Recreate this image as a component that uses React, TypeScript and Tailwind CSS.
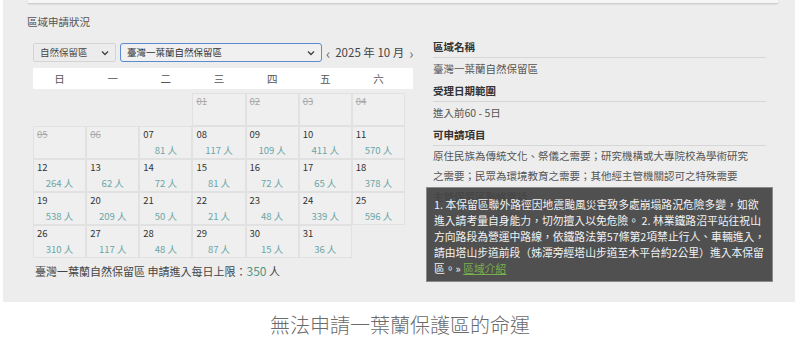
import React from "react";

type Day = { d: string; n?: number; off?: boolean } | null;

const weeks: Day[][] = [
  [null, null, null, { d: "01", off: true }, { d: "02", off: true }, { d: "03", off: true }, { d: "04", off: true }],
  [{ d: "05", off: true }, { d: "06", off: true }, { d: "07", n: 81 }, { d: "08", n: 117 }, { d: "09", n: 109 }, { d: "10", n: 411 }, { d: "11", n: 570 }],
  [{ d: "12", n: 264 }, { d: "13", n: 62 }, { d: "14", n: 72 }, { d: "15", n: 81 }, { d: "16", n: 72 }, { d: "17", n: 65 }, { d: "18", n: 378 }],
  [{ d: "19", n: 538 }, { d: "20", n: 209 }, { d: "21", n: 50 }, { d: "22", n: 21 }, { d: "23", n: 48 }, { d: "24", n: 339 }, { d: "25", n: 596 }],
  [{ d: "26", n: 310 }, { d: "27", n: 117 }, { d: "28", n: 48 }, { d: "29", n: 87 }, { d: "30", n: 15 }, { d: "31", n: 36 }, null],
];

const weekdays = ["日", "一", "二", "三", "四", "五", "六"];

const Chevron = () => (
  <svg width="8" height="6" viewBox="0 0 8 6" className="shrink-0">
    <path d="M1 1.5 L4 4.5 L7 1.5" fill="none" stroke="#444" strokeWidth="1.4" />
  </svg>
);

const App = () => {
  return (
    <div
      className="w-[800px] h-[339px] bg-white overflow-hidden"
      style={{ fontFamily: '"Noto Sans CJK TC", "Noto Sans", sans-serif' }}
    >
      <div className="relative ml-[3px] w-[792px] h-[302px] bg-[#ededed]">
        <div className="ml-[25px] w-[750px] h-[3px] bg-[#f6f6f6] shadow-[0_1px_2px_rgba(0,0,0,0.18)]" />

        <div className="flex">
          {/* left: calendar */}
          <div className="w-[430px] shrink-0 pl-[24px]">
            <h3 className="mt-[11px] text-[10.5px] leading-[16px] text-[#555]">區域申請狀況</h3>

            <div className="mt-[13px] ml-[6px] flex items-center h-[19px] whitespace-nowrap">
              <div className="w-[83px] shrink-0 h-[19px] flex items-center justify-between px-[6px] bg-[#ececec] border border-[#d4d4d4] rounded-[2px] text-[9.5px] text-[#444]">
                <span>自然保留區</span>
                <Chevron />
              </div>
              <div className="ml-[4px] w-[202px] shrink-0 h-[19px] flex items-center justify-between px-[6px] bg-[#f0f0f0] border-[1.5px] border-[#5b8bd0] rounded-[3px] text-[9.5px] text-[#333]">
                <span>臺灣一葉蘭自然保留區</span>
                <Chevron />
              </div>
              <div className="ml-[4px] shrink-0 flex items-center gap-[5px] text-[11.5px] text-[#444]">
                <span className="text-[#666] text-[14px] leading-none">‹</span>
                <span>2025 年 10 月</span>
                <span className="text-[#666] text-[14px] leading-none">›</span>
              </div>
            </div>

            <div className="mt-[6px] ml-[6px] w-[380px] h-[21px] bg-white">
              <div className="w-[372px] grid grid-cols-7 h-full">
                {weekdays.map((w) => (
                  <div key={w} className="flex items-center justify-center text-[10.5px] text-[#555]">
                    {w}
                  </div>
                ))}
              </div>
            </div>

            <div className="mt-[4px] ml-[6px] w-[372px] grid grid-cols-7">
              {weeks.flat().map((c, i) =>
                c ? (
                  <div
                    key={i}
                    className="h-[33px] border border-[#e1e1e1] bg-[#efefef] flex flex-col justify-between px-[3px] pt-[1px] pb-[1px]"
                  >
                    <span
                      className={
                        c.off
                          ? "text-[9.5px] leading-[13px] text-[#aaa] line-through"
                          : "text-[9.5px] leading-[13px] text-[#333]"
                      }
                    >
                      {c.d}
                    </span>
                    {c.n !== undefined && (
                      <span className="text-center text-[9.5px] leading-[13px] text-[#6aa6a6]">{c.n} 人</span>
                    )}
                  </div>
                ) : (
                  <div key={i} className="h-[33px]" />
                )
              )}
            </div>

            <p className="mt-[5px] ml-[8px] text-[11px] leading-[16px] text-[#444]">
              臺灣一葉蘭自然保留區 申請進入每日上限：<span className="text-[#4f9585] text-[12px]">350</span> 人
            </p>
          </div>

          {/* right: info */}
          <div className="w-[333px] shrink-0 pt-[33px] text-[10.5px] text-[#555]">
            <div className="h-[22px] leading-[21px] border-b border-[#d6d6d6] font-bold text-[#333]">區域名稱</div>
            <div className="leading-[22px]">臺灣一葉蘭自然保留區</div>
            <div className="h-[22px] leading-[21px] border-b border-[#d6d6d6] font-bold text-[#333]">受理日期範圍</div>
            <div className="leading-[22px]">進入前60 - 5日</div>
            <div className="h-[22px] leading-[21px] border-b border-[#d6d6d6] font-bold text-[#333]">可申請項目</div>
            <div className="leading-[20px] whitespace-nowrap">
              <div>原住民族為傳統文化、祭儀之需要；研究機構或大專院校為學術研究</div>
              <div>之需要；民眾為環境教育之需要；其他經主管機關認可之特殊需要</div>
            </div>
            <div className="h-[22px] leading-[21px] border-b border-[#d6d6d6] font-bold text-[#333]">主管保留區聯絡電話</div>
            <div className="leading-[22px]">03-2759370 #12</div>
          </div>
        </div>

        {/* tooltip */}
        <div className="absolute left-[423px] top-[187px] w-[347px] h-[95px] bg-[#484848]/95 border border-[#8a8a8a] pl-[7px] pt-[8px] text-[10.8px] leading-[16px] text-[#f2f2f2] whitespace-nowrap">
          <div>1. 本保留區聯外路徑因地震颱風災害致多處崩塌路況危險多變，如欲</div>
          <div>進入請考量自身能力，切勿擅入以免危險。 2. 林業鐵路沼平站往祝山</div>
          <div>方向路段為營運中路線，依鐵路法第57條第2項禁止行人、車輛進入，</div>
          <div>請由塔山步道前段（姊潭旁經塔山步道至木平台約2公里）進入本保留</div>
          <div>
            區。» <a className="text-[#78b04c] underline">區域介紹</a>
          </div>
        </div>
      </div>

      <p className="mt-[11px] text-center text-[20px] leading-[24px] font-light text-[#6b6b6b]">
        無法申請一葉蘭保護區的命運
      </p>
    </div>
  );
};

export default App;
